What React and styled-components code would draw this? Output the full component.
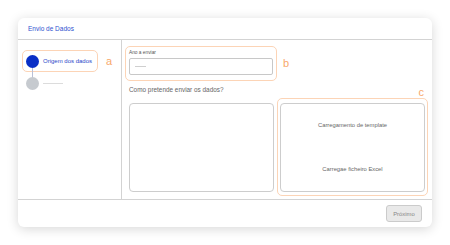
import React from 'react';
import styled, { createGlobalStyle } from 'styled-components';

const Global = createGlobalStyle`
body {
  margin: 0;
  background: #fff;
  font-family: "Liberation Sans", Arial, sans-serif;
}
`

const Page = styled.div`
padding: 18px;
`
const Card = styled.div`
width: 414px;
height: 209px;
background: #fff;
border-radius: 6px;
box-shadow: 0 2px 12px rgba(0, 0, 0, 0.16);
display: flex;
flex-direction: column;
box-sizing: border-box;
`
const Header = styled.div`
height: 22px;
display: flex;
align-items: center;
padding-left: 10px;
border-bottom: 1px solid #d3d3d3;
box-sizing: border-box;
color: #2f52cf;
font-size: 6.5px;
`
const Body = styled.div`
flex: 1;
display: flex;
`
const Sidebar = styled.div`
width: 104px;
border-right: 1px solid #d3d3d3;
padding: 10px 0 0 4px;
box-sizing: border-box;
`
const StepRow = styled.div`
display: flex;
align-items: center;
gap: 8px;
`
const StepBox = styled.div`
width: 76px;
height: 22px;
border: 1px solid #fcd4b6;
border-radius: 5px;
box-sizing: border-box;
display: flex;
align-items: center;
gap: 4px;
padding-left: 3px;
`
const Dot = styled.div`
width: 13px;
height: 13px;
border-radius: 50%;
background: ${p => p.$active ? '#0a2fc6' : '#c6cacf'};
position: relative;
flex-shrink: 0;
${p => p.$line && `
&::after {
  content: '';
  position: absolute;
  left: 6px;
  top: 13px;
  width: 1px;
  height: 10px;
  background: #b9c0d6;
}`}
`
const StepLabel = styled.span`
color: #2b47c9;
font-size: 6px;
white-space: nowrap;
`
const Mark = styled.span`
color: #f8a86c;
font-size: 11px;
line-height: 1;
`
const NextStep = styled.div`
display: flex;
align-items: center;
gap: 4px;
padding: 5px 0 0 3.5px;
`
const Placeholder = styled.div`
width: 20px;
height: 1.5px;
background: #dcdcdc;
`
const Main = styled.div`
flex: 1;
padding: 6px 4px 0 3px;
display: flex;
flex-direction: column;
`
const FieldRow = styled.div`
display: flex;
align-items: center;
gap: 6px;
`
const FieldBox = styled.div`
width: 152px;
height: 35px;
border: 1px solid #fcd4b6;
border-radius: 5px;
box-sizing: border-box;
padding: 3px 3px 0 3px;
`
const FieldLabel = styled.div`
font-size: 4.8px;
color: #555;
margin-bottom: 3px;
`
const Input = styled.div`
height: 17px;
border: 1px solid #c8c8c8;
border-radius: 2px;
box-sizing: border-box;
display: flex;
align-items: center;
padding-left: 5px;
`
const Dash = styled.div`
width: 11px;
height: 1px;
background: #cfcfcf;
`
const Question = styled.div`
font-size: 6.4px;
color: #666;
margin: 5px 0 0 4px;
`
const Options = styled.div`
display: flex;
align-items: center;
gap: 3px;
margin: 5px 0 0 4px;
`
const OptionBox = styled.div`
width: 145px;
height: 89px;
border: 1px solid #cdcdcd;
border-radius: 4px;
box-sizing: border-box;
display: flex;
flex-direction: column;
`
const Highlight = styled.div`
position: relative;
width: 151px;
height: 98px;
border: 1px solid #fcd4b6;
border-radius: 5px;
box-sizing: border-box;
display: flex;
align-items: center;
justify-content: center;
`
const CornerMark = styled(Mark)`
position: absolute;
right: 3px;
top: -12px;
`
const Choice = styled.div`
flex: 1;
display: flex;
align-items: center;
justify-content: center;
font-size: 5.8px;
color: #666;
`
const Footer = styled.div`
height: 28px;
border-top: 1px solid #d3d3d3;
box-sizing: border-box;
display: flex;
align-items: center;
justify-content: flex-end;
padding-right: 10px;
`
const Button = styled.button`
width: 36px;
height: 17px;
background: #e9e9e9;
border: 1px solid #cbcbcb;
border-radius: 3px;
color: #888;
font-family: inherit;
font-size: 5.9px;
padding: 0;
`

const App = () => {
  return (
    <Page>
      <Global />
      <Card>
        <Header>Envio de Dados</Header>
        <Body>
          <Sidebar>
            <StepRow>
              <StepBox>
                <Dot $active $line />
                <StepLabel>Origem dos dados</StepLabel>
              </StepBox>
              <Mark>a</Mark>
            </StepRow>
            <NextStep>
              <Dot />
              <Placeholder />
            </NextStep>
          </Sidebar>
          <Main>
            <FieldRow>
              <FieldBox>
                <FieldLabel>Ano a enviar</FieldLabel>
                <Input><Dash /></Input>
              </FieldBox>
              <Mark>b</Mark>
            </FieldRow>
            <Question>Como pretende enviar os dados?</Question>
            <Options>
              <OptionBox />
              <Highlight>
                <CornerMark>c</CornerMark>
                <OptionBox>
                  <Choice>Carregamento de template</Choice>
                  <Choice>Carregae ficheiro Excel</Choice>
                </OptionBox>
              </Highlight>
            </Options>
          </Main>
        </Body>
        <Footer>
          <Button>Próximo</Button>
        </Footer>
      </Card>
    </Page>
  )
}

export default App
